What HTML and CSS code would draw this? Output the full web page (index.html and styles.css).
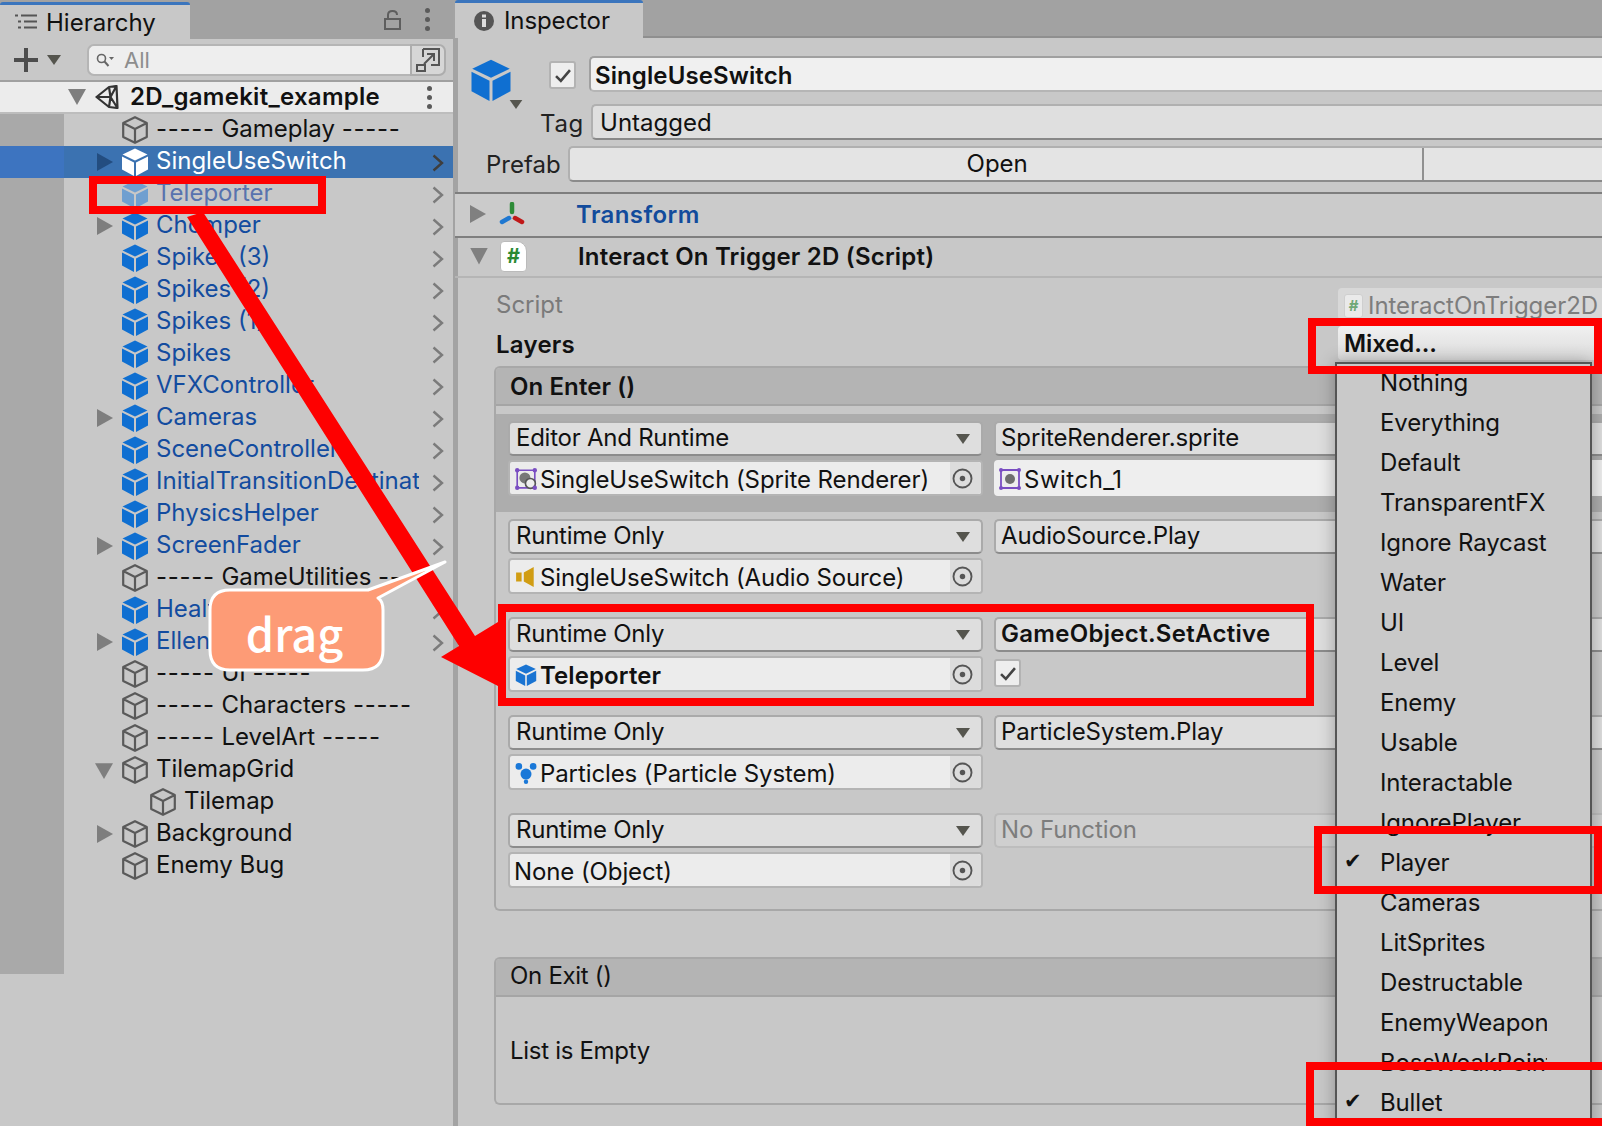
FILE: index.html
```html
<!DOCTYPE html>
<html lang="en">
<head>
<meta charset="utf-8">
<title>Unity Inspector</title>
<link rel="stylesheet" href="styles.css">
</head>
<body>
<svg class="defs" aria-hidden="true">
  <symbol id="cube" viewBox="0 0 26 28"><path d="M13 0.5 25.5 6.5 13 12.5 0.5 6.5Z"/><path d="M0 8.5 12 14.5V28L0 21.5Z"/><path d="M26 8.5 14 14.5V28L26 21.5Z"/></symbol>
  <symbol id="cubeo" viewBox="0 0 26 28"><path d="M13 1.2 24.8 7V21L13 26.8 1.2 21V7ZM1.2 7 13 13 24.8 7M13 13V26.8" fill="none" stroke="#5a5a5a" stroke-width="2.2" stroke-linejoin="round"/></symbol>
  <symbol id="chev" viewBox="0 0 12 18"><path d="M1.5 1.5 10 9 1.5 16.5" fill="none" stroke="#7b7b7b" stroke-width="2.4"/></symbol>
  <symbol id="target" viewBox="0 0 20 20"><circle cx="10" cy="10" r="8.6" fill="none" stroke="#555" stroke-width="1.8"/><circle cx="10" cy="10" r="2.6" fill="#555"/></symbol>
  <symbol id="down" viewBox="0 0 14 10"><path d="M0 0H14L7 10Z" fill="#55554e"/></symbol>
  <symbol id="check" viewBox="0 0 16 14"><path d="M1.5 7.5 6 12 14.5 2" fill="none" stroke="#444" stroke-width="2.4"/></symbol>
</svg>

<div class="app">
  <section class="hier">
    <header class="tabbar">
      <div class="tab tab-h">
        <svg class="ico-list" viewBox="0 0 22 15"><path d="M0 1.5H3M6 1.5H22M3 7.5H6M9 7.5H22M3 13.5H6M9 13.5H22" stroke="#555" stroke-width="2" fill="none"/></svg>
        <span>Hierarchy</span>
      </div>
      <div class="tab-tools">
        <svg class="ico-lock" viewBox="0 0 17 20"><path d="M1 9H16V19H1ZM4 9V5Q4 1 8.500 1Q13 1 13 5" fill="none" stroke="#5e5e5e" stroke-width="2"/></svg>
        <span class="kebab"><i></i><i></i><i></i></span>
      </div>
    </header>
    <div class="toolbar">
      <svg class="ico-plus" viewBox="0 0 24 24"><path d="M12 0V24M0 12H24" stroke="#4d4d4d" stroke-width="4"/></svg>
      <svg class="ico-pdown"><use href="#down"/></svg>
      <div class="search">
        <svg class="ico-search" viewBox="0 0 18 14"><circle cx="5.500" cy="5.500" r="4" fill="none" stroke="#666" stroke-width="1.6"/><path d="M8.500 8.500 12.500 13" stroke="#666" stroke-width="2"/><path d="M13 4H18L15.500 7Z" fill="#666"/></svg>
        <span>All</span>
      </div>
      <div class="search-btn">
        <svg viewBox="0 0 24 24"><path d="M7 1H23V17H15M7 1V9M1 17H9V23H1Z" fill="none" stroke="#555" stroke-width="2"/><path d="M8 16 17 7M11 6H18V13" fill="none" stroke="#555" stroke-width="2"/></svg>
      </div>
    </div>
    <div class="scene">
      <span class="tw-scene"></span>
      <svg class="ico-unity" viewBox="0 0 24 24"><path d="M1.500 12 14 2 21.500 1 22.500 23 14 22ZM1.500 12H15.500M14 2 15.500 12 14 22M15.500 12 21.500 1M15.500 12 22.500 23" fill="none" stroke="#333" stroke-width="2.200" stroke-linejoin="round"/></svg>
      <strong>2D_gamekit_example</strong>
      <span class="kebab kebab-scene"><i></i><i></i><i></i></span>
    </div>
    <div class="tree">
      <div class="row"><span class="tw"></span><svg class="ci"><use href="#cubeo"/></svg><span class="nm"><span class="dash">-----</span> Gameplay <span class="dash">-----</span></span></div>
      <div class="row sel p"><span class="tw tw-r"></span><svg class="ci"><use href="#cube"/></svg><span class="nm">SingleUseSwitch</span><svg class="chv"><use href="#chev"/></svg></div>
      <div class="row p ghost"><span class="tw"></span><svg class="ci"><use href="#cube"/></svg><span class="nm">Teleporter</span><svg class="chv"><use href="#chev"/></svg></div>
      <div class="row p"><span class="tw tw-r"></span><svg class="ci"><use href="#cube"/></svg><span class="nm">Chomper</span><svg class="chv"><use href="#chev"/></svg></div>
      <div class="row p"><span class="tw"></span><svg class="ci"><use href="#cube"/></svg><span class="nm">Spikes (3)</span><svg class="chv"><use href="#chev"/></svg></div>
      <div class="row p"><span class="tw"></span><svg class="ci"><use href="#cube"/></svg><span class="nm">Spikes (2)</span><svg class="chv"><use href="#chev"/></svg></div>
      <div class="row p"><span class="tw"></span><svg class="ci"><use href="#cube"/></svg><span class="nm">Spikes (1)</span><svg class="chv"><use href="#chev"/></svg></div>
      <div class="row p"><span class="tw"></span><svg class="ci"><use href="#cube"/></svg><span class="nm">Spikes</span><svg class="chv"><use href="#chev"/></svg></div>
      <div class="row p"><span class="tw"></span><svg class="ci"><use href="#cube"/></svg><span class="nm">VFXController</span><svg class="chv"><use href="#chev"/></svg></div>
      <div class="row p"><span class="tw tw-r"></span><svg class="ci"><use href="#cube"/></svg><span class="nm">Cameras</span><svg class="chv"><use href="#chev"/></svg></div>
      <div class="row p"><span class="tw"></span><svg class="ci"><use href="#cube"/></svg><span class="nm">SceneController</span><svg class="chv"><use href="#chev"/></svg></div>
      <div class="row p"><span class="tw"></span><svg class="ci"><use href="#cube"/></svg><span class="nm">InitialTransitionDestination</span><svg class="chv"><use href="#chev"/></svg></div>
      <div class="row p"><span class="tw"></span><svg class="ci"><use href="#cube"/></svg><span class="nm">PhysicsHelper</span><svg class="chv"><use href="#chev"/></svg></div>
      <div class="row p"><span class="tw tw-r"></span><svg class="ci"><use href="#cube"/></svg><span class="nm">ScreenFader</span><svg class="chv"><use href="#chev"/></svg></div>
      <div class="row"><span class="tw"></span><svg class="ci"><use href="#cubeo"/></svg><span class="nm"><span class="dash">-----</span> GameUtilities <span class="dash">-----</span></span></div>
      <div class="row p"><span class="tw"></span><svg class="ci"><use href="#cube"/></svg><span class="nm">HealthUI</span><svg class="chv"><use href="#chev"/></svg></div>
      <div class="row p"><span class="tw tw-r"></span><svg class="ci"><use href="#cube"/></svg><span class="nm">Ellen</span><svg class="chv"><use href="#chev"/></svg></div>
      <div class="row"><span class="tw"></span><svg class="ci"><use href="#cubeo"/></svg><span class="nm"><span class="dash">-----</span> UI <span class="dash">-----</span></span></div>
      <div class="row"><span class="tw"></span><svg class="ci"><use href="#cubeo"/></svg><span class="nm"><span class="dash">-----</span> Characters <span class="dash">-----</span></span></div>
      <div class="row"><span class="tw"></span><svg class="ci"><use href="#cubeo"/></svg><span class="nm"><span class="dash">-----</span> LevelArt <span class="dash">-----</span></span></div>
      <div class="row"><span class="tw tw-d"></span><svg class="ci"><use href="#cubeo"/></svg><span class="nm">TilemapGrid</span></div>
      <div class="row child"><span class="tw"></span><svg class="ci"><use href="#cubeo"/></svg><span class="nm">Tilemap</span></div>
      <div class="row"><span class="tw tw-r"></span><svg class="ci"><use href="#cubeo"/></svg><span class="nm">Background</span></div>
      <div class="row"><span class="tw"></span><svg class="ci"><use href="#cubeo"/></svg><span class="nm">Enemy Bug</span></div>
    </div>
  </section>

  <div class="split"></div>

  <section class="insp">
    <header class="tabbar tabbar-i">
      <div class="tab tab-i">
        <svg class="ico-info" viewBox="0 0 20 20"><circle cx="10" cy="10" r="10" fill="#555"/><rect x="8" y="8" width="4" height="8" fill="#ddd"/><rect x="8" y="3.500" width="4" height="3" fill="#ddd"/></svg>
        <span>Inspector</span>
      </div>
    </header>
    <div class="ihead">
      <div class="bigcube"><svg class="bigcube-ico"><use href="#cube"/></svg><svg class="bigcube-arrow"><use href="#down"/></svg></div>
      <div class="ihead-main">
        <div class="name-line">
          <span class="cb cb-head"><svg><use href="#check"/></svg></span>
          <div class="namefield">SingleUseSwitch</div>
        </div>
        <div class="tag-line"><span class="lbl">Tag</span><div class="tagfield">Untagged</div></div>
      </div>
    </div>
    <div class="prefab-line">
      <span class="lbl">Prefab</span>
      <div class="prefab-btn"><span class="open">Open</span><span class="rest"></span></div>
    </div>

    <div class="comp comp-t">
      <span class="tri-r"></span>
      <svg class="ico-trans" viewBox="0 0 26 24"><path d="M13 2V10" stroke="#2e8b38" stroke-width="4.500" stroke-linecap="round"/><path d="M10 16 3 20" stroke="#1f78d1" stroke-width="4.500" stroke-linecap="round"/><path d="M16 16 23 20" stroke="#c01818" stroke-width="4.500" stroke-linecap="round"/></svg>
      <span class="t-name">Transform</span>
    </div>
    <div class="comp comp-s">
      <span class="tri-d2"></span>
      <span class="scr"><span>#</span></span>
      <strong>Interact On Trigger 2D (Script)</strong>
    </div>

    <div class="prop prop-script">
      <span class="plabel dim">Script</span>
      <div class="pfield pscript"><span class="scr-s"><span>#</span></span>InteractOnTrigger2D</div>
    </div>
    <div class="prop prop-layers">
      <span class="plabel bold">Layers</span>
      <div class="pfield pmixed">Mixed...</div>
    </div>

    <div class="evbox">
      <div class="evhead bold">On Enter ()</div>
      <div class="evbody">
        <div class="entry sel-e">
          <div class="ecol1">
            <div class="dd">Editor And Runtime<svg><use href="#down"/></svg></div>
            <div class="obj"><svg class="ic" viewBox="0 0 20 20"><path d="M2 2H18V18H2Z" fill="none" stroke="#7a4ec2" stroke-width="1.500"/><circle cx="9" cy="9" r="5" fill="#777"/><circle cx="14" cy="14" r="4.500" fill="#eee" stroke="#555" stroke-width="1.500"/><g fill="#7a4ec2"><circle cx="2" cy="2" r="2"/><circle cx="18" cy="2" r="2"/><circle cx="2" cy="18" r="2"/><circle cx="18" cy="18" r="2"/></g></svg><span>SingleUseSwitch (Sprite Renderer)</span><span class="pick"><svg><use href="#target"/></svg></span></div>
          </div>
          <div class="ecol2">
            <div class="fn">SpriteRenderer.sprite</div>
            <div class="obj2"><svg class="ic" viewBox="0 0 22 22"><path d="M2 2H20V20H2Z" fill="none" stroke="#7a4ec2" stroke-width="1.800"/><circle cx="11" cy="11" r="5" fill="#6f6f6f"/><g fill="#7a4ec2"><circle cx="2" cy="2" r="2"/><circle cx="20" cy="2" r="2"/><circle cx="2" cy="20" r="2"/><circle cx="20" cy="20" r="2"/></g></svg><span>Switch_1</span></div>
          </div>
        </div>
        <div class="entry">
          <div class="ecol1">
            <div class="dd">Runtime Only<svg><use href="#down"/></svg></div>
            <div class="obj"><svg class="ic" viewBox="0 0 20 20"><path d="M1 6H6V14H1ZM8 6 17 1V19L8 14Z" fill="#d19d13"/></svg><span>SingleUseSwitch (Audio Source)</span><span class="pick"><svg><use href="#target"/></svg></span></div>
          </div>
          <div class="ecol2"><div class="fn">AudioSource.Play</div></div>
        </div>
        <div class="entry">
          <div class="ecol1">
            <div class="dd">Runtime Only<svg><use href="#down"/></svg></div>
            <div class="obj"><svg class="ic ic-cube"><use href="#cube"/></svg><b>Teleporter</b><span class="pick"><svg><use href="#target"/></svg></span></div>
          </div>
          <div class="ecol2">
            <div class="fn fn-b">GameObject.SetActive</div>
            <span class="cb cb-arg"><svg><use href="#check"/></svg></span>
          </div>
        </div>
        <div class="entry">
          <div class="ecol1">
            <div class="dd">Runtime Only<svg><use href="#down"/></svg></div>
            <div class="obj"><svg class="ic" viewBox="0 0 20 20" fill="#1a78d8"><circle cx="10" cy="11" r="5"/><circle cx="3.500" cy="4" r="3"/><circle cx="16.500" cy="4" r="3"/><circle cx="10" cy="18" r="2"/></svg><span>Particles (Particle System)</span><span class="pick"><svg><use href="#target"/></svg></span></div>
          </div>
          <div class="ecol2"><div class="fn">ParticleSystem.Play</div></div>
        </div>
        <div class="entry">
          <div class="ecol1">
            <div class="dd">Runtime Only<svg><use href="#down"/></svg></div>
            <div class="obj obj-none"><span>None (Object)</span><span class="pick"><svg><use href="#target"/></svg></span></div>
          </div>
          <div class="ecol2"><div class="fn fn-off">No Function</div></div>
        </div>
      </div>
    </div>

    <div class="evbox evbox-exit">
      <div class="evhead">On Exit ()</div>
      <div class="evempty">List is Empty</div>
    </div>
  </section>

  <ul class="menu">
    <li>Nothing</li><li>Everything</li><li>Default</li><li>TransparentFX</li><li>Ignore Raycast</li><li>Water</li><li>UI</li><li>Level</li><li>Enemy</li><li>Usable</li><li>Interactable</li><li>IgnorePlayer</li><li class="on">Player</li><li>Cameras</li><li>LitSprites</li><li>Destructable</li><li>EnemyWeapon</li><li>BossWeakPoint</li><li class="on">Bullet</li>
  </ul>

  <svg class="arrow" viewBox="0 0 1602 1126"><path d="M187 217 203 212 475 636 498 622V686L441 657 459 646Z" fill="#fe0000"/></svg>

  <div class="rbox rb-tele"></div>
  <div class="rbox rb-mixed"></div>
  <div class="rbox rb-entry"></div>
  <div class="rbox rb-player"></div>
  <div class="rbox rb-bullet"></div>

  <div class="callout">
    <svg viewBox="0 0 245 120"><path d="M25 35H163L240 7 173 43Q178 46 178 55V95Q178 115 158 115H25Q5 115 5 95V55Q5 35 25 35Z" fill="#fd9b76" stroke="#fff" stroke-width="3" stroke-linejoin="round"/></svg>
    <span>drag</span>
  </div>
</div>
</body>
</html>
```
FILE: styles.css
```css
* { box-sizing: border-box; }
html, body { margin: 0; padding: 0; }
body { font-family: Inter, "Liberation Sans", sans-serif; font-size: 24px; color: #111; background: #c8c8c8; }
.defs { position: absolute; width: 0; height: 0; }
.app { position: relative; width: 1602px; height: 1126px; overflow: hidden; display: flex; background: #c8c8c8; }
.bold { font-weight: 600; letter-spacing: .25px; }

/* hierarchy */
.hier { width: 453px; flex: none; display: flex; flex-direction: column; }
.split { width: 5px; flex: none; background: #a3a3a3; }
.tabbar { height: 39px; background: #a2a2a2; display: flex; justify-content: space-between; flex: none; padding-top: 2px; }
.tab { display: flex; align-items: center; background: #c8c8c8; border-top: 3px solid #3b75bd; border-radius: 3px 3px 0 0; }
.tab-h { width: 190px; padding-left: 15px; gap: 9px; }
.ico-list { width: 22px; height: 15px; margin-top: -2px; }
.tab-tools { display: flex; align-items: center; padding-right: 23px; gap: 24px; padding-bottom: 2px; }
.ico-lock { width: 17px; height: 20px; }
.kebab { display: flex; flex-direction: column; gap: 4px; width: 5px; }
.kebab i { width: 5px; height: 5px; border-radius: 50%; background: #5a5a5a; display: block; }
.toolbar { height: 43px; flex: none; display: flex; align-items: center; padding-left: 14px; border-bottom: 2px solid #a0a0a0; }
.ico-plus { width: 24px; height: 24px; }
.ico-pdown { width: 14px; height: 10px; margin-left: 9px; }
.search { width: 323px; height: 32px; margin-left: 26px; border: 2px solid #b5b5b5; border-right: 0; border-radius: 7px 0 0 7px; background: #eee; display: flex; align-items: center; padding-left: 7px; color: #8d8d8d; font-size: 22px; }
.ico-search { width: 18px; height: 14px; margin-right: 10px; }
.search-btn { width: 36px; height: 32px; border: 2px solid #adadad; border-radius: 0 7px 7px 0; background: #d6d6d6; display: flex; align-items: center; justify-content: center; }
.search-btn svg { width: 24px; height: 24px; }
.scene { height: 32px; flex: none; background: #ececec; display: flex; align-items: center; position: relative; padding-left: 68px; border-bottom: 2px solid #bdbdbd; }
.tw-scene { width: 18px; height: 16px; background: #7e7e7e; clip-path: polygon(0 0, 100% 0, 50% 100%); }
.ico-unity { width: 24px; height: 24px; margin-left: 9px; }
.scene strong { font-weight: 600; letter-spacing: .28px; margin-left: 11px; line-height: 1; }
.kebab-scene { position: absolute; left: 427px; top: 4px; }

.tree { height: 860px; flex: none; background: linear-gradient(to right, #a9a9a9 64px, transparent 64px); }
.row { height: 32px; display: flex; align-items: center; padding-left: 97px; }
.row.child { padding-left: 125px; }
.tw { width: 16px; height: 18px; flex: none; margin-right: 9px; }
.tw-r { background: #7e7e7e; clip-path: polygon(0 0, 100% 50%, 0 100%); }
.tw-d { background: #7e7e7e; clip-path: polygon(0 12%, 100% 12%, 50% 100%); width: 18px; margin-left: -2px; }
.ci { width: 26px; height: 28px; flex: none; }
.nm { margin-left: 8px; flex: 1; white-space: nowrap; overflow: hidden; min-width: 0; line-height: 30px; height: 32px; }
.dash { letter-spacing: .7px; }
.chv { width: 12px; height: 18px; flex: none; margin: 2px 9px 0 13px; }
.row.p .ci { fill: #0f6fd1; }
.row.p .nm { color: #134c9f; }
.row.sel { background: linear-gradient(to right, #3d74c0 64px, #3b72b1 64px); }
.row.sel .ci { fill: #fff; }
.row.sel .nm { color: #fff; }
.row.sel .tw-r { background: #234d80; }
.row.sel .chv use { filter: brightness(.5); }
.row.ghost .ci { fill: #6f9fd0; }
.row.ghost .nm { color: #5873ae; }

/* inspector */
.insp { flex: 1; min-width: 0; display: flex; flex-direction: column; margin-left: -3px; position: relative; }
.tabbar-i { height: 38px; padding: 0; border-bottom: 2px solid #8f8f8f; justify-content: flex-start; background: #a2a2a2; }
.tab-i { width: 188px; padding-left: 19px; gap: 10px; height: 38px; border-top-width: 3px; position: relative; }
.tab-i span { letter-spacing: -.1px; }
.ico-info { width: 20px; height: 20px; }
.ihead { display: flex; flex: none; height: 102px; }
.bigcube { width: 93px; flex: none; padding: 21px 0 0 16px; position: relative; }
.bigcube-ico { width: 40px; height: 42px; fill: #0f6fd1; display: block; }
.bigcube-arrow { position: absolute; left: 54px; top: 62px; width: 14px; height: 9px; }
.ihead-main { flex: 1; min-width: 0; padding-top: 18px; }
.name-line { display: flex; align-items: center; height: 36px; }
.cb { display: flex; align-items: center; justify-content: center; background: #eee; border: 2px solid #b3b3b3; border-radius: 3px; flex: none; }
.cb-head { width: 27px; height: 28px; margin-right: 13px; margin-left: 1px; margin-top: 2px; }
.cb svg { width: 18px; height: 15px; }
.namefield { flex: 1; height: 36px; background: #f0f0f0; border: 2px solid #a0a0a0; border-width: 2px 0 2px 2px; border-color: #a0a0a0 #a0a0a0 #b5b5b5; border-radius: 5px 0 0 5px; padding-left: 4px; font-weight: 600; letter-spacing: .1px; line-height: 35px; }
.tag-line { display: flex; align-items: center; height: 36px; margin-top: 12px; margin-left: -8px; }
.lbl { color: #222; }
.tag-line .lbl { letter-spacing: .7px; padding-top: 2px; }
.tagfield { flex: 1; margin-left: 7px; height: 36px; background: #dfdfdf; border: 2px solid #b0b0b0; border-width: 2px 0 2px 2px; border-bottom-color: #888; border-radius: 5px 0 0 5px; padding-left: 7px; line-height: 33px; }
.prefab-line { display: flex; align-items: center; height: 36px; margin-top: 6px; padding-left: 31px; flex: none; }
.prefab-btn { flex: 1; margin-left: 7px; height: 36px; display: flex; background: #e4e4e4; border: 2px solid #b0b0b0; border-width: 2px 0 2px 2px; border-bottom-color: #8b8b8b; border-radius: 5px 0 0 5px; }
.open { width: 854px; padding-left: 3px; text-align: center; border-right: 2px solid #909090; line-height: 31px; }
.rest { flex: 1; }

.comp { flex: none; display: flex; align-items: center; position: relative; }
.comp-t { height: 44px; margin-top: 10px; border-top: 2px solid #7e7e7e; padding: 0 0 2px 15px; background: #cbcbcb; }
.comp-s { height: 42px; border-top: 2px solid #7f7f7f; border-bottom: 2px solid #b5b5b5; padding: 0 0 2px 15px; }
.tri-r { width: 16px; height: 18px; background: #808080; clip-path: polygon(0 0, 100% 50%, 0 100%); }
.ico-trans { width: 26px; height: 24px; margin-left: 13px; }
.t-name { margin-left: 51px; color: #124b9c; font-weight: 600; letter-spacing: .4px; }
.tri-d2 { width: 18px; height: 17px; background: #808080; clip-path: polygon(0 0, 100% 0, 50% 100%); }
.scr { width: 27px; height: 31px; margin-left: 12px; background: #fff; border: 1px solid #bbb; border-radius: 4px; border-top-right-radius: 10px; display: flex; align-items: center; justify-content: center; color: #2a8a34; font-weight: 700; font-size: 20px; }
.comp-s strong { margin-left: 51px; font-weight: 600; letter-spacing: .2px; }

.prop { flex: none; display: flex; align-items: center; justify-content: space-between; padding-left: 41px; }
.prop-script { height: 34px; margin-top: 9px; }
.prop-layers { height: 34px; margin-top: 5px; }
.plabel.bold { padding-top: 2px; }
.plabel.dim { color: #7a7a7a; }
.pfield { width: 264px; flex: none; padding-left: 6px; }
.pscript { height: 32px; background: #d8d8d8; color: #7d7d7d; display: flex; align-items: center; border-radius: 4px 0 0 4px; padding-top: 3px; letter-spacing: -.05px; }
.scr-s { width: 19px; height: 24px; background: #eaeaea; border: 1px solid #cfcfcf; border-radius: 3px; display: flex; align-items: center; justify-content: center; color: #6fa877; font-size: 15px; font-weight: 700; margin-right: 5px; }
.pmixed { height: 34px; background: linear-gradient(#f0f0f0, #dcdcdc); border-radius: 4px 0 0 4px; font-weight: 600; line-height: 36px; letter-spacing: -.1px; }

.evbox { flex: none; margin-left: 39px; margin-top: 6px; border: 2px solid #a8a8a8; border-right: 0; border-radius: 6px 0 0 6px; height: 545px; }
.evhead { height: 38px; background: #b4b4b4; border-bottom: 2px solid #a5a5a5; padding-left: 14px; line-height: 38px; border-radius: 4px 0 0 0; letter-spacing: -.3px; }
.evhead.bold { letter-spacing: .1px; }
.evbody { padding-top: 8px; }
.entry { height: 98px; display: flex; padding: 7px 0 0 12px; gap: 11px; }
.sel-e { background: #adadad; }
.ecol1 { width: 475px; flex: none; display: flex; flex-direction: column; gap: 4px; }
.ecol2 { flex: 1; min-width: 0; display: flex; flex-direction: column; gap: 4px; }
.dd, .fn { height: 35px; background: #dedede; border: 2px solid #aaa; border-bottom-color: #8c8c8c; border-radius: 5px; line-height: 30px; position: relative; white-space: nowrap; }
.dd { padding-left: 6px; letter-spacing: -.25px; }
.fn { border-right: 0; border-radius: 5px 0 0 5px; padding-left: 5px; letter-spacing: -.1px; }
.fn-b { font-weight: 600; letter-spacing: .3px; }
.dd svg { position: absolute; right: 11px; top: 11px; width: 14px; height: 10px; }
.obj { height: 36px; background: #ececec; border: 2px solid #b4b4b4; border-radius: 4px; padding: 2px 0 0 6px; display: flex; align-items: center; position: relative; white-space: nowrap; letter-spacing: -.1px; }
.obj b { font-weight: 600; letter-spacing: .1px; }
.obj-none { padding-left: 4px; }
.ic { width: 22px; height: 22px; flex: none; margin-right: 3px; margin-left: -1px; }
.ic-cube { fill: #1a74d2; }
.pick { position: absolute; right: 0; top: 0; bottom: 0; width: 31px; background: #dcdcdc; display: flex; align-items: center; justify-content: flex-start; padding-left: 2px; border-radius: 0 3px 3px 0; }
.pick svg { width: 21px; height: 21px; }
.obj2 { height: 36px; background: #eeeeee; padding: 2px 0 0 6px; display: flex; align-items: center; white-space: nowrap; border-radius: 4px 0 0 4px; letter-spacing: .5px; }
.fn-off { background: #cfcfcf; border-color: #bdbdbd; color: #7d7d7d; }
.cb-arg { width: 27px; height: 28px; margin-top: 3px; }
.evbox-exit { margin-top: 46px; height: 148px; }
.evbox-exit .evhead { line-height: 34px; }
.evempty { padding-left: 14px; line-height: 32px; margin-top: 38px; letter-spacing: -.3px; }

/* popup menu over the inspector */
.menu { position: absolute; left: 1335px; top: 362px; width: 257px; height: 770px; margin: 0; padding: 1px 0 0 43px; list-style: none; background: #c9c9c9; border: 2px solid #555; box-shadow: 0 0 16px rgba(0,0,0,.3); letter-spacing: -.15px; }
.menu li { height: 40px; line-height: 36px; width: 167px; overflow: hidden; white-space: nowrap; position: relative; }
.menu li.on { overflow: visible; }
.menu li.on::before { content: "✔"; position: absolute; left: -36px; top: -2px; font-family: "DejaVu Sans", sans-serif; font-size: 21px; }

/* annotations drawn over the screenshot */
.arrow { position: absolute; left: 0; top: 0; width: 1602px; height: 1126px; pointer-events: none; }
.rbox { position: absolute; border: 8px solid #fe0000; }
.rb-tele { left: 89px; top: 176px; width: 237px; height: 38px; }
.rb-mixed { left: 1308px; top: 318px; width: 294px; height: 56px; }
.rb-entry { left: 498px; top: 604px; width: 816px; height: 102px; }
.rb-player { left: 1314px; top: 826px; width: 288px; height: 68px; }
.rb-bullet { left: 1306px; top: 1062px; width: 320px; height: 64px; }
.callout { position: absolute; left: 210px; top: 590px; width: 173px; height: 80px; display: flex; align-items: center; justify-content: center; color: #fff; font-family: "Noto Sans CJK JP", "Noto Sans", sans-serif; font-weight: 500; font-size: 45px; }
.callout svg { position: absolute; left: -5px; top: -35px; width: 245px; height: 120px; }
.callout span { position: relative; line-height: 1; margin: 5px 4px 0 0; }
```
